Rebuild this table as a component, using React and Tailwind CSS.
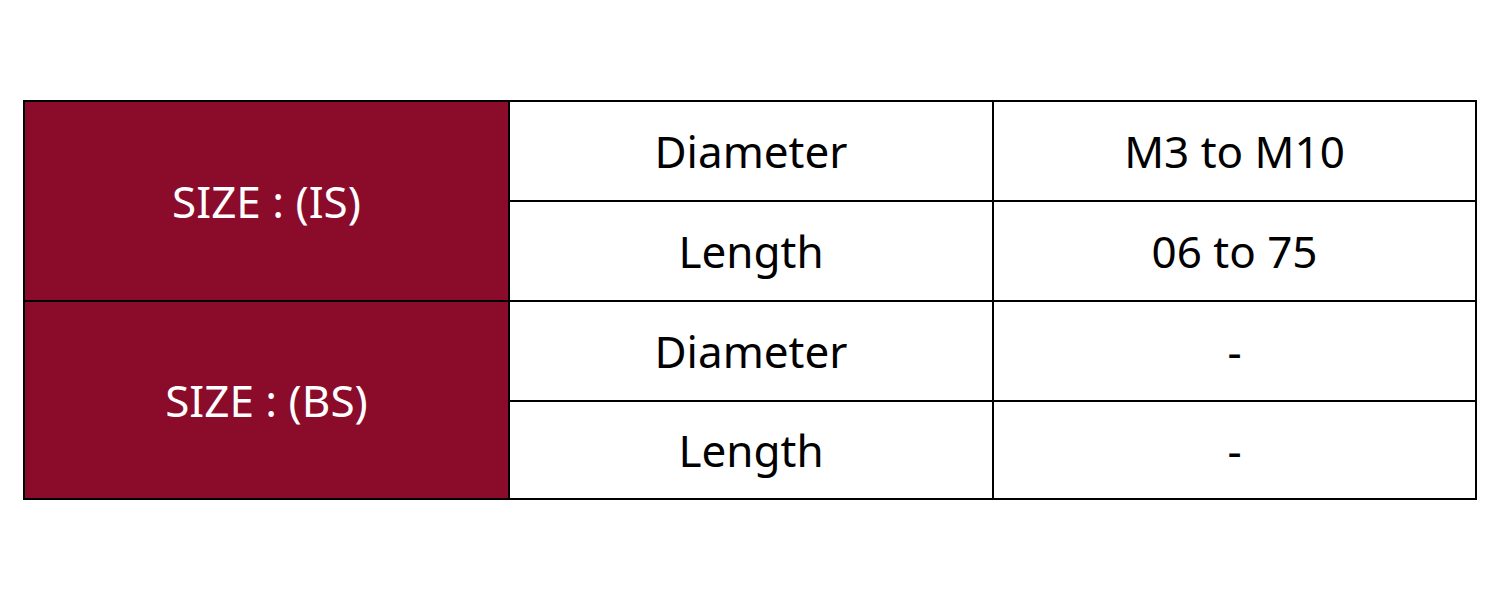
import React from 'react';

const rows = [
  { group: 'SIZE : (IS)', items: [['Diameter', 'M3 to M10'], ['Length', '06 to 75']] },
  { group: 'SIZE : (BS)', items: [['Diameter', '-'], ['Length', '-']] },
];

export default function App() {
  return (
    <div className="w-[1500px] h-[600px] bg-white pt-[100px] pl-[23px]" style={{ fontFamily: '"Noto Sans", "Open Sans", sans-serif' }}>
      <table className="border-collapse w-[1452px] table-fixed text-[44px] leading-none text-black">
        <colgroup>
          <col className="w-[485px]" />
          <col className="w-[484px]" />
          <col className="w-[483px]" />
        </colgroup>
        <tbody>
          {rows.map((r, ri) =>
            r.items.map(([label, value], i) => (
              <tr key={r.group + label} className={ri === 1 && i === 1 ? 'h-[98px]' : 'h-[100px]'}>
                {i === 0 && (
                  <td rowSpan={2} className="border-2 border-black bg-[#8b0b2b] text-white text-center align-middle">
                    {r.group}
                  </td>
                )}
                <td className="border-2 border-black text-center align-middle">{label}</td>
                <td className="border-2 border-black text-center align-middle">{value}</td>
              </tr>
            ))
          )}
        </tbody>
      </table>
    </div>
  );
}
